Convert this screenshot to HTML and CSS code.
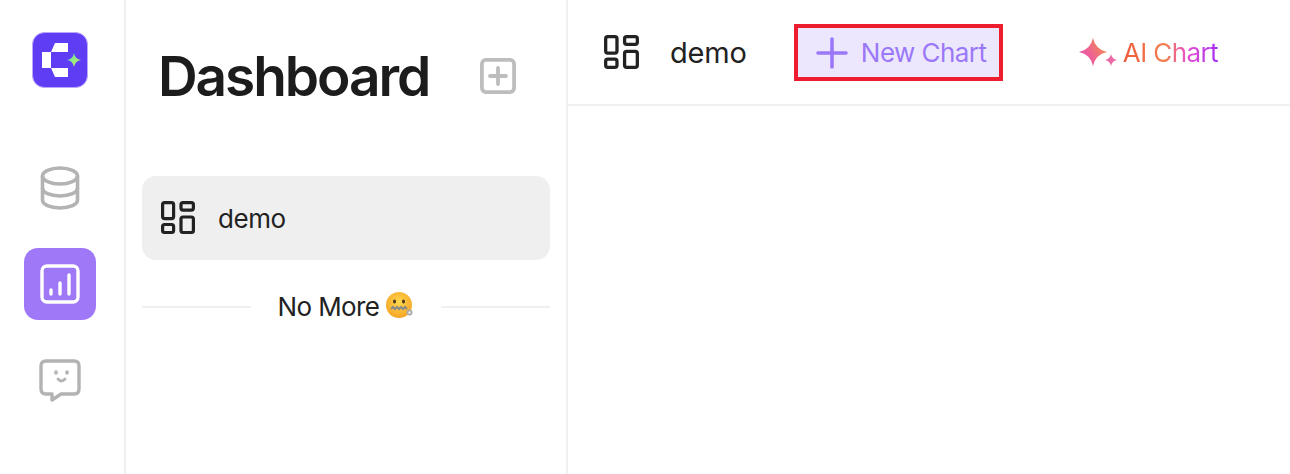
FILE: index.html
```html
<!DOCTYPE html>
<html lang="en">
<head>
    <meta charset="UTF-8">
    <title>Dashboard</title>
    <link rel="stylesheet" href="styles.css">
</head>
<body>
    <div class="app">
        <nav class="rail">
            <svg class="logo" viewBox="0 0 56 56">
                <defs>
                    <linearGradient id="spark" x1="0" y1="0" x2="1" y2="1">
                        <stop offset="0" stop-color="#4fe0b8"/>
                        <stop offset="1" stop-color="#dcf24e"/>
                    </linearGradient>
                </defs>
                <rect x="0.500" y="0.500" width="55" height="55" rx="12" fill="#5f3df5" stroke="#b9a8fa"/>
                <path d="M10 20H19V36H10Z M19 20L23 11H36V20Z M19 36H36V45H23Z" fill="#fff"/>
                <path d="M42 21Q43 27 49 28Q43 29 42 35Q41 29 35 28Q41 27 42 21Z" fill="url(#spark)"/>
            </svg>
            <svg class="rail-icon db" viewBox="0 0 40 44" fill="none" stroke="#b3b3b3" stroke-width="3.600">
                <ellipse cx="20" cy="10" rx="17.500" ry="8"/>
                <path d="M2.500 10V34C2.500 38.500 10 42 20 42S37.500 38.500 37.500 34V10"/>
                <path d="M2.500 22C2.500 26.500 10 30 20 30S37.500 26.500 37.500 22"/>
            </svg>
            <div class="rail-active">
                <svg viewBox="0 0 40 40" fill="none" stroke="#fff" stroke-width="3.400" stroke-linecap="round">
                    <rect x="2" y="2" width="36" height="36" rx="5"/>
                    <path d="M11 26V30M20 19V30M29 11V30"/>
                </svg>
            </div>
            <svg class="rail-icon chat" viewBox="0 0 42 44" fill="none" stroke="#b3b3b3" stroke-width="3.400" stroke-linejoin="round" stroke-linecap="round">
                <path d="M7 2H35Q40 2 40 7V30Q40 35 35 35H22L13 41V35H7Q2 35 2 30V7Q2 2 7 2Z"/>
                <path d="M17 13V14M28 13V14" stroke-width="3.600"/>
                <path d="M19 20Q22.500 24 26 20" stroke-width="2.800"/>
            </svg>
        </nav>

        <aside class="sidebar">
            <div class="sidebar-head">
                <h1>Dashboard</h1>
                <svg class="add-icon" viewBox="0 0 36 36" fill="none" stroke="#bdbdbd" stroke-width="3.800" stroke-linecap="round">
                    <rect x="1.900" y="1.900" width="32.200" height="32.200" rx="4"/>
                    <path d="M18 10V26M10 18H26"/>
                </svg>
            </div>
            <div class="board-item">
                <svg class="grid-icon" viewBox="0 0 36 36" fill="none" stroke="#222" stroke-width="3.200">
                    <rect x="2.600" y="2.600" width="11" height="16" rx="2"/>
                    <rect x="21" y="2.600" width="12.400" height="7.500" rx="2"/>
                    <rect x="2.600" y="24.500" width="11" height="8" rx="2"/>
                    <rect x="21" y="17" width="12.400" height="15.500" rx="2"/>
                </svg>
                <span>demo</span>
            </div>
            <div class="no-more">
                <span class="line"></span>
                <span class="no-more-text">No More
                    <svg class="emoji" viewBox="0 0 28 28">
                        <defs>
                            <radialGradient id="face" cx="0.500" cy="0.400" r="0.600">
                                <stop offset="0" stop-color="#ffd84f"/>
                                <stop offset="1" stop-color="#f5a524"/>
                            </radialGradient>
                        </defs>
                        <circle cx="13" cy="13" r="13" fill="url(#face)"/>
                        <ellipse cx="8.500" cy="9.500" rx="1.500" ry="2" fill="#4a3520"/>
                        <ellipse cx="17.500" cy="9.500" rx="1.500" ry="2" fill="#4a3520"/>
                        <path d="M5 17L7 15L9 17L11 15L13 17L15 15L17 17L19 15L21 17" fill="none" stroke="#8a8a8a" stroke-width="2"/>
                        <circle cx="23.500" cy="20.500" r="3" fill="#a9a9a9"/>
                        <circle cx="23.500" cy="20.500" r="1.200" fill="#eee"/>
                    </svg>
                </span>
                <span class="line"></span>
            </div>
        </aside>

        <main class="content">
            <header class="topbar">
                <svg class="grid-icon top-grid" viewBox="0 0 36 36" fill="none" stroke="#222" stroke-width="3.200">
                    <rect x="2.600" y="2.600" width="11" height="16" rx="2"/>
                    <rect x="21" y="2.600" width="12.400" height="7.500" rx="2"/>
                    <rect x="2.600" y="24.500" width="11" height="8" rx="2"/>
                    <rect x="21" y="17" width="12.400" height="15.500" rx="2"/>
                </svg>
                <span class="board-name">demo</span>
                <div class="new-chart">
                    <svg viewBox="0 0 32 32" stroke="#9b78f8" stroke-width="3.600" stroke-linecap="round">
                        <path d="M16 2V30M2 16H30"/>
                    </svg>
                    <span>New Chart</span>
                </div>
                <div class="ai-chart">
                    <svg viewBox="0 0 38 32">
                        <defs>
                            <linearGradient id="star" x1="0" y1="0.800" x2="1" y2="0.200">
                                <stop offset="0" stop-color="#ea45c4"/>
                                <stop offset="1" stop-color="#f29048"/>
                            </linearGradient>
                        </defs>
                        <path d="M14 1Q16.500 12.500 28 15Q16.500 17.500 14 29Q11.500 17.500 0 15Q11.500 12.500 14 1Z" fill="url(#star)"/>
                        <path d="M32 17Q33 22 38 23Q33 24 32 29Q31 24 26 23Q31 22 32 17Z" fill="#ea6aa6"/>
                    </svg>
                    <span>AI Chart</span>
                </div>
            </header>
        </main>
    </div>
</body>
</html>
```

FILE: styles.css
```css
* {
    box-sizing: border-box;
    margin: 0;
    padding: 0;
}

html, body {
    height: 100%;
    overflow: hidden;
}

body {
    font-family: 'Inter', sans-serif;
    color: #1f1f1f;
    background: #fff;
}

.app {
    display: flex;
    height: 100%;
}

/* left icon rail */
.rail {
    width: 126px;
    flex: none;
    border-right: 2px solid #f0f0f0;
    display: flex;
    flex-direction: column;
    align-items: center;
    padding: 32px 4px 0 0;
}

.logo {
    width: 56px;
    height: 56px;
    margin-bottom: 78px;
}

.rail-icon.db {
    width: 40px;
    height: 44px;
    margin-bottom: 38px;
}

.rail-active {
    width: 72px;
    height: 72px;
    border-radius: 14px;
    background: #9f78f8;
    display: flex;
    align-items: center;
    justify-content: center;
    margin-bottom: 39px;
}

.rail-active svg {
    width: 40px;
    height: 40px;
}

.rail-icon.chat {
    width: 42px;
    height: 44px;
}

/* board list */
.sidebar {
    width: 442px;
    flex: none;
    border-right: 2px solid #f0f0f0;
    padding: 0 16px;
}

.sidebar-head {
    height: 176px;
    display: flex;
    align-items: flex-start;
    padding: 42px 0 0 16px;
}

h1 {
    font-size: 55px;
    font-weight: 600;
    line-height: 68px;
    letter-spacing: -2.1px;
    color: #1c1c1c;
}

.add-icon {
    width: 36px;
    height: 36px;
    margin: 16px 0 0 51px;
}

.board-item {
    height: 84px;
    border-radius: 14px;
    background: #efefef;
    display: flex;
    align-items: center;
    padding-left: 18px;
    font-size: 26px;
    letter-spacing: -0.45px;
    color: #222;
}

.grid-icon {
    width: 36px;
    height: 36px;
    flex: none;
}

.board-item span {
    margin-left: 22px;
}

.no-more {
    display: flex;
    align-items: center;
    height: 46px;
    margin-top: 24px;
    font-size: 26px;
    letter-spacing: -0.6px;
}

.line {
    flex: 1;
    height: 2px;
    background: #f0f0f0;
}

.no-more-text {
    display: flex;
    align-items: center;
    gap: 7px;
    width: 190px;
    justify-content: center;
    padding-bottom: 2px;
    color: #222;
}

.emoji {
    width: 28px;
    height: 28px;
}

/* main area */
.content {
    flex: 1;
}

.topbar {
    height: 106px;
    border-bottom: 2px solid #f0f0f0;
    display: flex;
    align-items: center;
    padding-left: 35px;
    padding-top: 1px;
}

.top-grid {
    width: 37px;
    height: 37px;
}

.board-name {
    margin-left: 30px;
    font-size: 29px;
    letter-spacing: -0.15px;
    color: #222;
}

.new-chart {
    margin-left: 47px;
    width: 209px;
    height: 57px;
    border: 4px solid #ed1c2e;
    background: #ede7fd;
    display: flex;
    align-items: center;
    padding-left: 18px;
    font-size: 26px;
    letter-spacing: -0.55px;
    color: #9b78f8;
}

.new-chart svg {
    width: 32px;
    height: 32px;
    flex: none;
    margin-right: 13px;
}

.ai-chart {
    margin-left: 76px;
    display: flex;
    align-items: center;
    font-size: 26px;
    letter-spacing: -0.6px;
}

.ai-chart svg {
    width: 38px;
    height: 32px;
    margin-right: 6px;
}

.ai-chart span {
    background: linear-gradient(90deg, #ef5a3c 0%, #f2804f 45%, #e64fd0 68%, #a52cf5 100%);
    -webkit-background-clip: text;
    background-clip: text;
    color: transparent;
}
```
